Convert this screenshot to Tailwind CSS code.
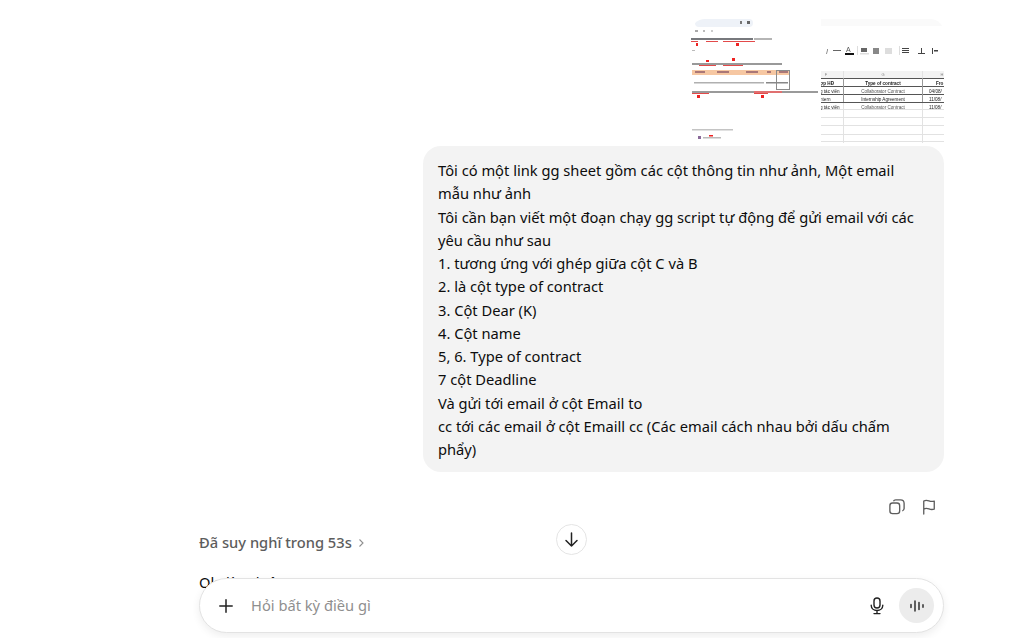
<!DOCTYPE html>
<html lang="vi">
<head>
  <meta charset="UTF-8" />
  <title>Chat</title>
  <script src="https://cdn.jsdelivr.net/npm/@tailwindcss/browser@4"></script>
</head>
<body class="bg-white">
  <div class="relative h-[638px] w-[1024px] overflow-hidden bg-white font-['Noto_Sans','Open_Sans',sans-serif] text-[#0d0d0d]">
    <div class="ml-[199px] flex w-[745px] flex-col pt-[19px]">

      <!-- attached images -->
      <div class="flex justify-end gap-[3px]">
        <svg class="h-[124px] w-[127px] rounded-tl-[14px] blur-[0.6px]" viewBox="0 0 127 124">
          <rect width="127" height="124" fill="#fff"/>
          <rect x="4" y="0" width="58" height="8" rx="4" fill="#eef2f8"/>
          <rect x="49" y="2" width="2" height="3" fill="#777"/><rect x="56" y="2" width="3" height="3" fill="#666"/>
          <rect x="4" y="11" width="3" height="2" fill="#aaa"/><rect x="12" y="11" width="2" height="2" fill="#bbb"/><rect x="20" y="11" width="2" height="2" fill="#ccc"/>
          <rect x="0" y="19" width="62" height="2" fill="#77797d"/><rect x="63" y="19" width="18" height="2" fill="#b5b5b5"/>
          <rect x="0" y="22" width="7" height="1" fill="#e34a4a"/><rect x="15" y="22" width="12" height="1" fill="#e34a4a"/><rect x="32" y="22" width="32" height="1" fill="#e34a4a"/>
          <rect x="5" y="24" width="2" height="3" fill="#e22"/><rect x="45" y="24" width="3" height="3" fill="#e22"/>
          <rect x="1" y="31" width="3" height="1" fill="#bbb"/>
          <rect x="1" y="44" width="90" height="2" fill="#999"/>
          <rect x="8" y="46" width="17" height="1" fill="#e34a4a"/><rect x="32" y="46" width="20" height="1" fill="#e34a4a"/>
          <rect x="15" y="41" width="3" height="2" fill="#e22"/><rect x="41" y="39" width="3" height="3" fill="#e22"/>
          <rect x="1" y="51" width="98" height="5" fill="#f6c7a2"/>
          <rect x="4" y="52" width="10" height="2" fill="#a77"/><rect x="26" y="52" width="12" height="2" fill="#a77"/><rect x="55" y="52" width="12" height="2" fill="#a77"/><rect x="76" y="52" width="4" height="2" fill="#a77"/><rect x="88" y="52" width="9" height="2" fill="#a77"/>
          <rect x="85.5" y="51.5" width="13" height="19" fill="none" stroke="#8b8b8b"/>
          <rect x="3" y="63" width="70" height="1.5" fill="#b0b0b0"/><rect x="75" y="63" width="22" height="1.5" fill="#888"/>
          <rect x="1" y="72" width="126" height="2" fill="#9a9a9a"/>
          <rect x="1" y="74" width="17" height="1" fill="#e34a4a"/><rect x="63" y="72" width="28" height="2" fill="#e07070"/><rect x="63" y="74" width="14" height="1" fill="#e34a4a"/>
          <rect x="6" y="76" width="3" height="3" fill="#e22"/><rect x="70" y="76" width="3" height="3" fill="#e22"/>
          <rect x="1" y="110" width="41" height="1.5" fill="#c4c4c4"/>
          <rect x="7" y="117" width="3" height="3" fill="#8a6a9a"/><rect x="12" y="118" width="18" height="1.5" fill="#bbb"/><rect x="18" y="116" width="4" height="1.5" fill="#e22"/>
        </svg>

        <svg class="h-[124px] w-[123px] rounded-tr-[14px] blur-[0.5px]" viewBox="0 0 123 124" font-family="Liberation Sans, sans-serif">
          <rect width="123" height="124" fill="#fff"/>
          <rect width="123" height="7" fill="#fafafa"/>
          <g fill="#555" font-size="7">
            <text x="5" y="35" font-style="italic">I</text>
            <rect x="12" y="31" width="8" height="1" fill="#666"/>
            <text x="25" y="33">A</text>
            <rect x="24" y="34" width="9" height="2" fill="#111"/>
            <rect x="40" y="29" width="6" height="4" fill="#666"/><rect x="39" y="34" width="9" height="1.5" fill="#ddd"/>
            <rect x="52" y="29" width="6" height="6" fill="#888"/>
            <rect x="64" y="29" width="7" height="6" fill="#ddd"/>
            <rect x="81" y="29" width="7" height="1" fill="#444"/><rect x="81" y="31" width="7" height="1" fill="#444"/><rect x="81" y="33" width="7" height="1" fill="#444"/>
            <rect x="97" y="34" width="7" height="1" fill="#444"/><rect x="100" y="29" width="1" height="5" fill="#444"/>
            <rect x="111" y="29" width="1" height="6" fill="#444"/><rect x="113" y="31" width="4" height="1.5" fill="#444"/>
          </g>
          <rect x="78" y="27" width="1" height="9" fill="#ddd"/>
          <rect x="36" y="27" width="1" height="9" fill="#ddd"/>
          <rect y="52" width="123" height="7" fill="#f3f3f3"/>
          <g fill="#888" font-size="4" text-anchor="middle">
            <text x="5" y="57">F</text><text x="62" y="57">G</text><text x="121" y="57">H</text>
          </g>
          <g stroke="#e2e2e2" fill="none">
            <path d="M0 90.5H123M0 98.5H123M0 106.5H123M0 115.5H123M0 122.5H123"/>
            <path d="M22.5 52V124M101.5 52V124"/>
          </g>
          <g stroke="#555" fill="none">
            <path d="M0 59.5H123M0 67.5H123M0 75.5H123"/>
            <path d="M22.5 59V84M101.5 59V84" stroke="#999"/>
            <path d="M0 83.5H123" stroke-width="1.2"/>
          </g>
          <g font-size="4.6" fill="#222">
            <text x="-1" y="66" font-weight="bold">ợp HĐ</text>
            <text x="62" y="66" font-weight="bold" text-anchor="middle">Type of contract</text>
            <text x="115" y="66" font-weight="bold">Fro</text>
            <text x="-1" y="74">g tác viên</text>
            <text x="62" y="74" text-anchor="middle" fill="#555">Collaborator Contract</text>
            <text x="108" y="74">04/08/</text>
            <text x="-1" y="82">ntern</text>
            <text x="62" y="82" text-anchor="middle">Internship Agreement</text>
            <text x="108" y="82">11/08/</text>
            <text x="-1" y="90">g tác viên</text>
            <text x="62" y="90" text-anchor="middle" fill="#555">Collaborator Contract</text>
            <text x="108" y="90">11/08/</text>
          </g>
        </svg>
      </div>

      <!-- user message -->
      <div class="mt-[3px] self-end w-[521px] rounded-[18px] bg-[#f3f3f3] px-[15px] pt-[13px] pb-[11px] text-[14.7px] leading-[23.25px]">
        <p>Tôi có một link gg sheet gồm các cột thông tin như ảnh, Một email mẫu như ảnh</p>
        <p>Tôi cần bạn viết một đoạn chạy gg script tự động để gửi email với các yêu cầu như sau</p>
        <p>1. tương ứng với ghép giữa cột C và B</p>
        <p>2. là cột type of contract</p>
        <p>3. Cột Dear (K)</p>
        <p>4. Cột name</p>
        <p>5, 6. Type of contract</p>
        <p>7 cột Deadline</p>
        <p>Và gửi tới email ở cột Email to</p>
        <p>cc tới các email ở cột Emaill cc (Các email cách nhau bởi dấu chấm phẩy)</p>
      </div>

      <!-- message actions -->
      <div class="mt-[26px] flex justify-end gap-[17px] pr-[8px] text-[#5d5d5d]">
        <svg class="h-[18px] w-[16px]" viewBox="0 0 18 20" fill="none" stroke="currentColor" stroke-width="1.5">
          <rect x="1" y="5.5" width="11" height="12" rx="3"/>
          <path d="M5 3.6C5.5 2.4 6.4 2 7.6 2h5.4C15.4 2 17 3.6 17 6v5.4c0 1.6-.8 2.6-2 3.1"/>
        </svg>
        <svg class="h-[18px] w-[14px]" viewBox="0 0 16 20" fill="none" stroke="currentColor" stroke-width="1.5" stroke-linejoin="round" stroke-linecap="round">
          <path d="M2 18V3.2C4 2 6 2.2 8 3c2 .8 3.8.9 6 .2v9.2c-2.2.7-4 .6-6-.2-2-.8-4-1-6 .2"/>
        </svg>
      </div>

      <!-- thinking label -->
      <div class="mt-[15px] flex items-center gap-[6px] text-[14.7px] leading-[23px] font-medium text-[#5d5d5d]">
        <span>Đã suy nghĩ trong 53s</span>
        <svg class="h-[10px] w-[7px]" viewBox="0 0 7 10" fill="none" stroke="#8f8f8f" stroke-width="1.1"><path d="M1.5 1.5 5 5 1.5 8.5"/></svg>
      </div>

      <p class="mt-[17px] text-[14.7px] leading-[23px]">Ok, làm luôn!</p>
    </div>

    <!-- scroll to bottom -->
    <button class="absolute left-[556px] top-[524px] flex h-[31px] w-[31px] items-center justify-center rounded-full border border-[#e5e5e5] bg-white">
      <svg class="h-[17px] w-[17px]" viewBox="0 0 17 17" fill="none" stroke="#222" stroke-width="1.5" stroke-linecap="round" stroke-linejoin="round"><path d="M8.5 2v13M3 9.5l5.5 5.5L14 9.5"/></svg>
    </button>

    <!-- composer -->
    <div class="absolute left-[199px] top-[578px] flex h-[55px] w-[745px] items-center rounded-[28px] border border-[#e3e3e3] bg-white pl-[19px] pr-[9px] shadow-[0_3px_8px_rgba(0,0,0,0.07)]">
      <svg class="h-[14px] w-[14px]" viewBox="0 0 14 14" fill="none" stroke="#222" stroke-width="1.5" stroke-linecap="round"><path d="M7 .8v12.4M.8 7h12.4"/></svg>
      <span class="ml-[18px] text-[14.7px] text-[#8f8f8f]">Hỏi bất kỳ điều gì</span>
      <svg class="ml-auto h-[18px] w-[14px]" viewBox="0 0 14 18" fill="none" stroke="#222" stroke-width="1.4" stroke-linecap="round">
        <rect x="4" y="1" width="6" height="10" rx="3"/>
        <path d="M1.2 8.2c0 3.2 2.5 5.3 5.8 5.3s5.8-2.1 5.8-5.3M7 13.5v3M4 16.6h6"/>
      </svg>
      <div class="ml-[15px] flex h-[35px] w-[35px] items-center justify-center rounded-full bg-[#ececec]">
        <svg class="h-[12px] w-[14px]" viewBox="0 0 14 12" fill="none" stroke="#222" stroke-width="1.4" stroke-linecap="round"><path d="M1 4.5v3M5 1v10M9 2.5v7M13 4.8v2.4"/></svg>
      </div>
    </div>
  </div>
</body>
</html>
